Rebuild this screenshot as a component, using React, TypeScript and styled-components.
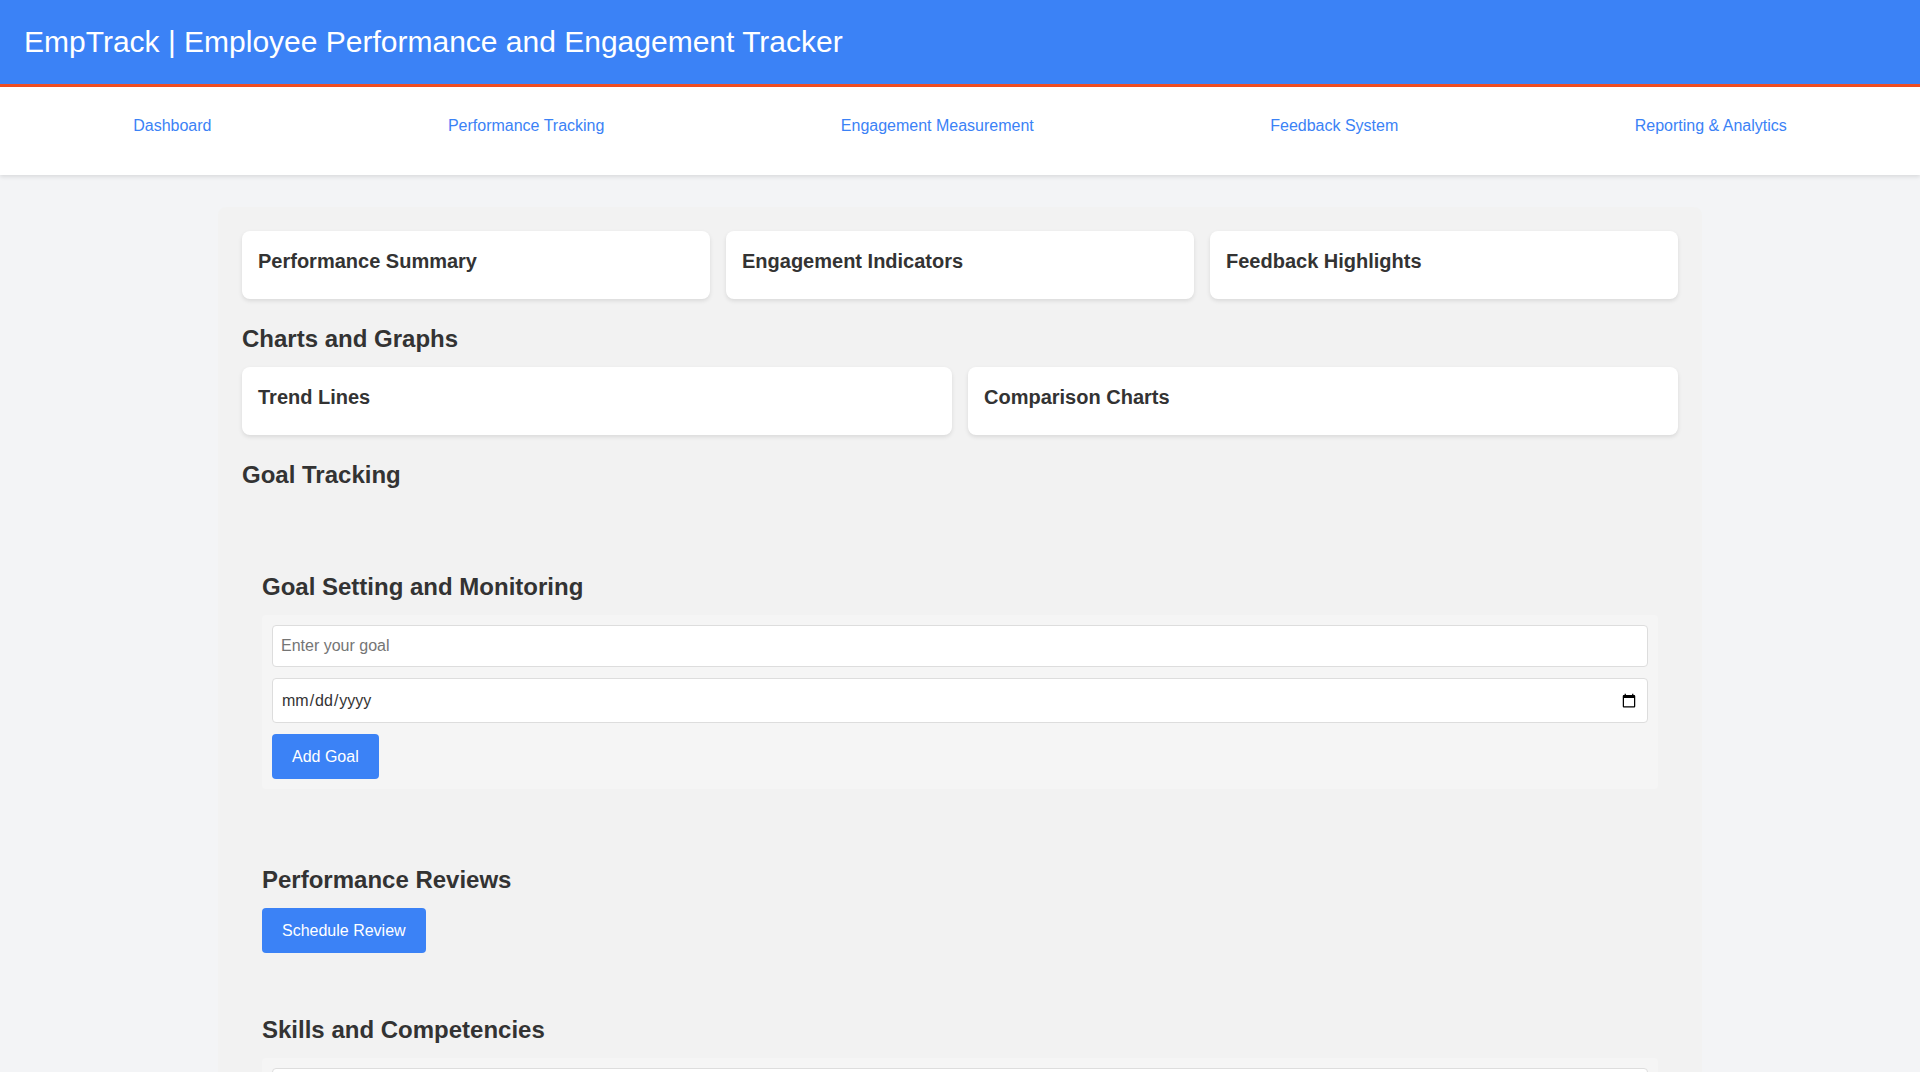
import styled, { createGlobalStyle } from 'styled-components';

const GlobalStyle = createGlobalStyle`
  body {
    margin: 0;
    background: #f3f4f6;
    font-family: "Liberation Sans", Arial, sans-serif;
    color: #333;
  }
  * {
    box-sizing: border-box;
  }
`;

const navItems = [
  'Dashboard',
  'Performance Tracking',
  'Engagement Measurement',
  'Feedback System',
  'Reporting & Analytics',
];

const summaryCards = ['Performance Summary', 'Engagement Indicators', 'Feedback Highlights'];
const chartCards = ['Trend Lines', 'Comparison Charts'];

const App = () => {
  return (
    <>
      <GlobalStyle />
      <Header>
        <Title>EmpTrack | Employee Performance and Engagement Tracker</Title>
      </Header>
      <Nav>
        <NavList>
          {navItems.map(item => (
            <li key={item}>
              <NavLink href="#">{item}</NavLink>
            </li>
          ))}
        </NavList>
      </Nav>

      <Main>
        <CardGrid $cols={3}>
          {summaryCards.map(title => (
            <Card key={title}>
              <CardTitle>{title}</CardTitle>
            </Card>
          ))}
        </CardGrid>

        <SectionTitle>Charts and Graphs</SectionTitle>
        <CardGrid $cols={2}>
          {chartCards.map(title => (
            <Card key={title}>
              <CardTitle>{title}</CardTitle>
            </Card>
          ))}
        </CardGrid>

        <SectionTitle>Goal Tracking</SectionTitle>
        <SubSections>
          <SubSection>
            <SubTitle>Goal Setting and Monitoring</SubTitle>
            <FormPanel>
              <TextInput type="text" placeholder="Enter your goal" />
              <DateInput type="date" />
              <PrimaryButton>Add Goal</PrimaryButton>
            </FormPanel>
          </SubSection>

          <SubSection>
            <SubTitle>Performance Reviews</SubTitle>
            <div>
              <PrimaryButton>Schedule Review</PrimaryButton>
            </div>
          </SubSection>

          <SubSection>
            <SubTitle>Skills and Competencies</SubTitle>
            <FormPanel>
              <TextInput type="text" aria-label="Skill" />
              <PrimaryButton>Add Skill</PrimaryButton>
            </FormPanel>
          </SubSection>
        </SubSections>
      </Main>
    </>
  );
};

const Header = styled.header`
  background: #3b82f6;
  padding: 24px;
  border-bottom: 3px solid #f04e23;
`;

const Title = styled.h1`
  margin: 0;
  color: #fff;
  font-size: 30px;
  font-weight: 400;
  line-height: 36px;
`;

const Nav = styled.nav`
  background: #fff;
  box-shadow: 0 2px 4px rgba(0, 0, 0, 0.1);
`;

const NavList = styled.ul`
  display: flex;
  justify-content: space-around;
  list-style: none;
  margin: 0;
  padding: 30px 15px 40px;
`;

const NavLink = styled.a`
  color: #3b82f6;
  text-decoration: none;
  font-size: 16px;
  line-height: 18px;
`;

const Main = styled.main`
  width: 1484px;
  margin: 32px auto;
  padding: 24px;
  background: #f2f2f2;
  border-radius: 8px;
`;

const CardGrid = styled.div<{ $cols: number }>`
  display: grid;
  grid-template-columns: repeat(${p => p.$cols}, 1fr);
  gap: 16px;
`;

const Card = styled.div`
  background: #fff;
  border-radius: 8px;
  box-shadow: 0 2px 4px rgba(0, 0, 0, 0.1);
  padding: 19px 16px 26px;
`;

const CardTitle = styled.h3`
  margin: 0;
  font-size: 20px;
  font-weight: 700;
  line-height: 23px;
  color: #333;
`;

const SectionTitle = styled.h2`
  margin: 26px 0 14px;
  font-size: 24px;
  font-weight: 700;
  line-height: 28px;
  color: #333;
`;

const SubSections = styled.div`
  display: flex;
  flex-direction: column;
  gap: 63px;
  padding: 0 20px;
  margin-top: 84px;
`;

const SubSection = styled.section``;

const SubTitle = styled.h2`
  margin: 0 0 14px;
  font-size: 24px;
  font-weight: 700;
  line-height: 28px;
  color: #333;
`;

const FormPanel = styled.div`
  display: flex;
  flex-direction: column;
  align-items: stretch;
  gap: 11px;
  padding: 10px;
  margin-bottom: 14px;
  background: #f5f5f5;
  border-radius: 4px;
`;

const TextInput = styled.input`
  display: block;
  width: 100%;
  height: 42px;
  padding: 0 8px;
  border: 1px solid #ddd;
  border-radius: 4px;
  background: #fff;
  font-family: "Liberation Sans", Arial, sans-serif;
  font-size: 16px;
  color: #333;
`;

const DateInput = styled(TextInput)`
  height: 45px;
`;

const PrimaryButton = styled.button`
  align-self: flex-start;
  padding: 12px 20px;
  border: none;
  border-radius: 4px;
  background: #3b82f6;
  color: #fff;
  font-family: "Liberation Sans", Arial, sans-serif;
  font-size: 16px;
  line-height: 21px;
  cursor: pointer;
`;

export default App;
